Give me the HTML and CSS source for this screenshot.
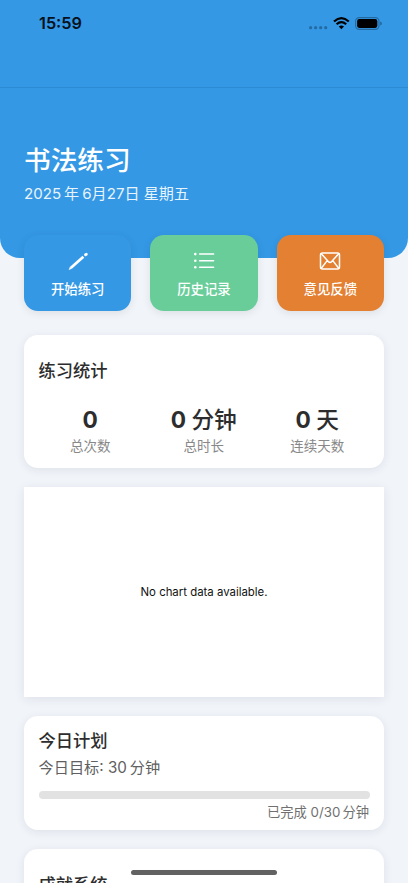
FILE: index.html
```html
<!DOCTYPE html>
<html lang="zh-CN">
<head>
<meta charset="utf-8">
<title>书法练习</title>
<link rel="stylesheet" href="styles.css">
</head>
<body>
<div class="screen">
  <header class="hero">
    <div class="status">
      <span class="time">15:59</span>
      <svg class="indicators" width="76" height="16" viewBox="0 0 76 16">
        <g fill="#246ba1"><circle cx="3.6" cy="11.7" r="1.6"/><circle cx="8.6" cy="11.7" r="1.6"/><circle cx="13.7" cy="11.7" r="1.6"/><circle cx="18.7" cy="11.7" r="1.6"/></g>
        <g fill="none" stroke="#000" stroke-width="2.2"><path d="M27 5.5Q34.4-1.2 41.8 5.5"/><path d="M29.6 8.2Q34.4 3.9 39.2 8.2"/></g>
        <path d="M31.8 10.5Q34.4 8.3 37 10.5L34.4 13.2Z" fill="#000"/>
        <rect x="48.6" y="1.6" width="23.4" height="11.8" rx="3.6" fill="none" stroke="#246a9f" stroke-width="1.1"/>
        <rect x="50.1" y="3.1" width="20.2" height="8.8" rx="2.1" fill="#000"/>
        <path d="M73.1 5.5Q75 6.2 75 7.5T73.1 9.5Z" fill="#246a9f"/>
      </svg>
    </div>
    <div class="heading">
      <h1>书法练习</h1>
      <p class="date">2025<span class="thin"></span>年<span class="thin"></span>6月27日 星期五</p>
    </div>
  </header>
  <main class="content">
    <nav class="actions">
      <button class="action blue">
        <svg width="24" height="24" viewBox="0 0 24 24" stroke="#fff" stroke-linecap="round"><path d="M5 18.8L17.4 7.7" stroke-width="2.7" stroke-linecap="butt"/><path d="M6 19.7L2.7 20.9 4 17.6Z" fill="#fff" stroke="none"/><path d="M19.7 5.7L20.2 5.3" stroke-width="3"/></svg>
        <span>开始练习</span>
      </button>
      <button class="action green">
        <svg width="24" height="24" viewBox="0 0 24 24"><g fill="#fff"><circle cx="3.3" cy="5.1" r="1.3"/><circle cx="3.3" cy="11.7" r="1.3"/><circle cx="3.3" cy="18.2" r="1.3"/></g><path d="M7.6 5.1H21.6M7.6 11.7H21.6M7.6 18.2H21.6" stroke="#fff" stroke-width="1.5" stroke-linecap="round"/></svg>
        <span>历史记录</span>
      </button>
      <button class="action orange">
        <svg width="24" height="24" viewBox="0 0 24 24" fill="none" stroke="#fff" stroke-width="1.5" stroke-linecap="round" stroke-linejoin="round"><rect x="2.5" y="3.9" width="19" height="16.2" rx="2"/><path d="M3.3 4.7L10.3 12.6Q12 14.2 13.7 12.6L20.7 4.7M3.3 19.3L9.2 11.6M20.7 19.3L14.8 11.6"/></svg>
        <span>意见反馈</span>
      </button>
    </nav>
    <section class="card stats">
      <h2>练习统计</h2>
      <div class="figures">
        <div class="figure"><strong>0</strong><span>总次数</span></div>
        <div class="figure"><strong>0 <b>分钟</b></strong><span>总时长</span></div>
        <div class="figure"><strong>0 <b>天</b></strong><span>连续天数</span></div>
      </div>
    </section>
    <section class="chart">No chart data available.</section>
    <section class="card plan">
      <h2>今日计划</h2>
      <p class="goal">今日目标: 30<span class="thin"></span>分钟</p>
      <div class="track"></div>
      <p class="done">已完成 0/30<span class="hair"></span>分钟</p>
    </section>
    <section class="card achievements"><h2>成就系统</h2></section>
  </main>
  <div class="home-indicator"></div>
</div>
</body>
</html>
```
FILE: styles.css
```css
* { box-sizing: border-box; }
body {
  margin: 0;
  background: #f1f5fa;
  color: #333;
  font-family: Inter, "Noto Sans CJK SC", sans-serif;
}
h1, h2, p { margin: 0; }
.screen { position: relative; height: 883px; overflow: hidden; }
.hero {
  height: 258px;
  background: #3498e5;
  border-radius: 0 0 20px 20px;
}
.status {
  display: flex;
  justify-content: space-between;
  height: 88px;
  padding: 14px 25px 0 39px;
  border-bottom: 1px solid #2d8bd4;
}
.time { margin-top: -1px; color: #06111c; font-size: 16.3px; line-height: 20px; font-weight: 600; }
.indicators { margin-top: 2px; }
.heading { padding: 52px 24px 0; color: #fff; }
h1 { font-size: 26.7px; line-height: 40px; font-weight: 500; }
.date { margin-top: 3px; font-size: 15.1px; line-height: 22px; color: #e8f4fc; }
.thin { display: inline-block; width: 3px; }
.hair { display: inline-block; width: 2px; }
.content {
  display: flex;
  flex-direction: column;
  margin-top: -23.5px;
  padding: 0 24px;
}
.actions { display: grid; grid-template-columns: repeat(3, 1fr); gap: 19px; }
.action {
  display: flex;
  flex-direction: column;
  align-items: center;
  height: 76px;
  padding: 14.5px 0 0;
  border: 0;
  border-radius: 14px;
  color: #fff;
  font: 500 13.4px/20px Inter, "Noto Sans CJK SC", sans-serif;
  box-shadow: 0 2px 8px rgba(0, 0, 0, .09);
}
.action svg { flex: none; margin-bottom: 6px; }
.blue { background: #3498e5; }
.green { background: #69cd9a; }
.orange { background: #e48032; }
.card {
  background: #fff;
  border-radius: 14px;
  padding: 0 14.5px;
  box-shadow: 0 2px 10px rgba(30, 35, 60, .09);
}
h2 { font-size: 17.3px; line-height: 26px; font-weight: 500; color: #2d2d2d; }
.stats { height: 133.5px; margin-top: 24px; padding-top: 23px; }
.figures { display: grid; grid-template-columns: repeat(3, 1fr); margin: 20px -4.5px 0 -5px; }
.figure { display: flex; flex-direction: column; align-items: center; }
.figure strong { font-size: 22.7px; line-height: 32px; font-weight: 650; color: #2d2d2d; }
.figure b { font-weight: 500; }
.figure span { font-size: 13.5px; line-height: 20px; color: #888; }
.chart {
  display: flex;
  align-items: center;
  justify-content: center;
  height: 210px;
  margin-top: 19px;
  background: #fff;
  color: #111;
  font-size: 11.4px;
  box-shadow: 0 2px 10px rgba(30, 35, 60, .09);
}
.plan { height: 114px; margin-top: 19px; padding-top: 12px; }
.goal { font-size: 15.2px; line-height: 24px; margin-top: 2px; color: #606060; }
.track { height: 8px; margin-top: 11px; border-radius: 4px; background: #e2e2e2; }
.done { margin-top: 3px; padding-right: .5px; text-align: right; font-size: 13.3px; line-height: 20px; color: #707070; }
.achievements { height: 120px; margin-top: 19px; padding-top: 23px; }
.home-indicator {
  position: absolute;
  left: 131px;
  bottom: 8px;
  width: 146px;
  height: 5px;
  border-radius: 3px;
  background: #626262;
}
```
